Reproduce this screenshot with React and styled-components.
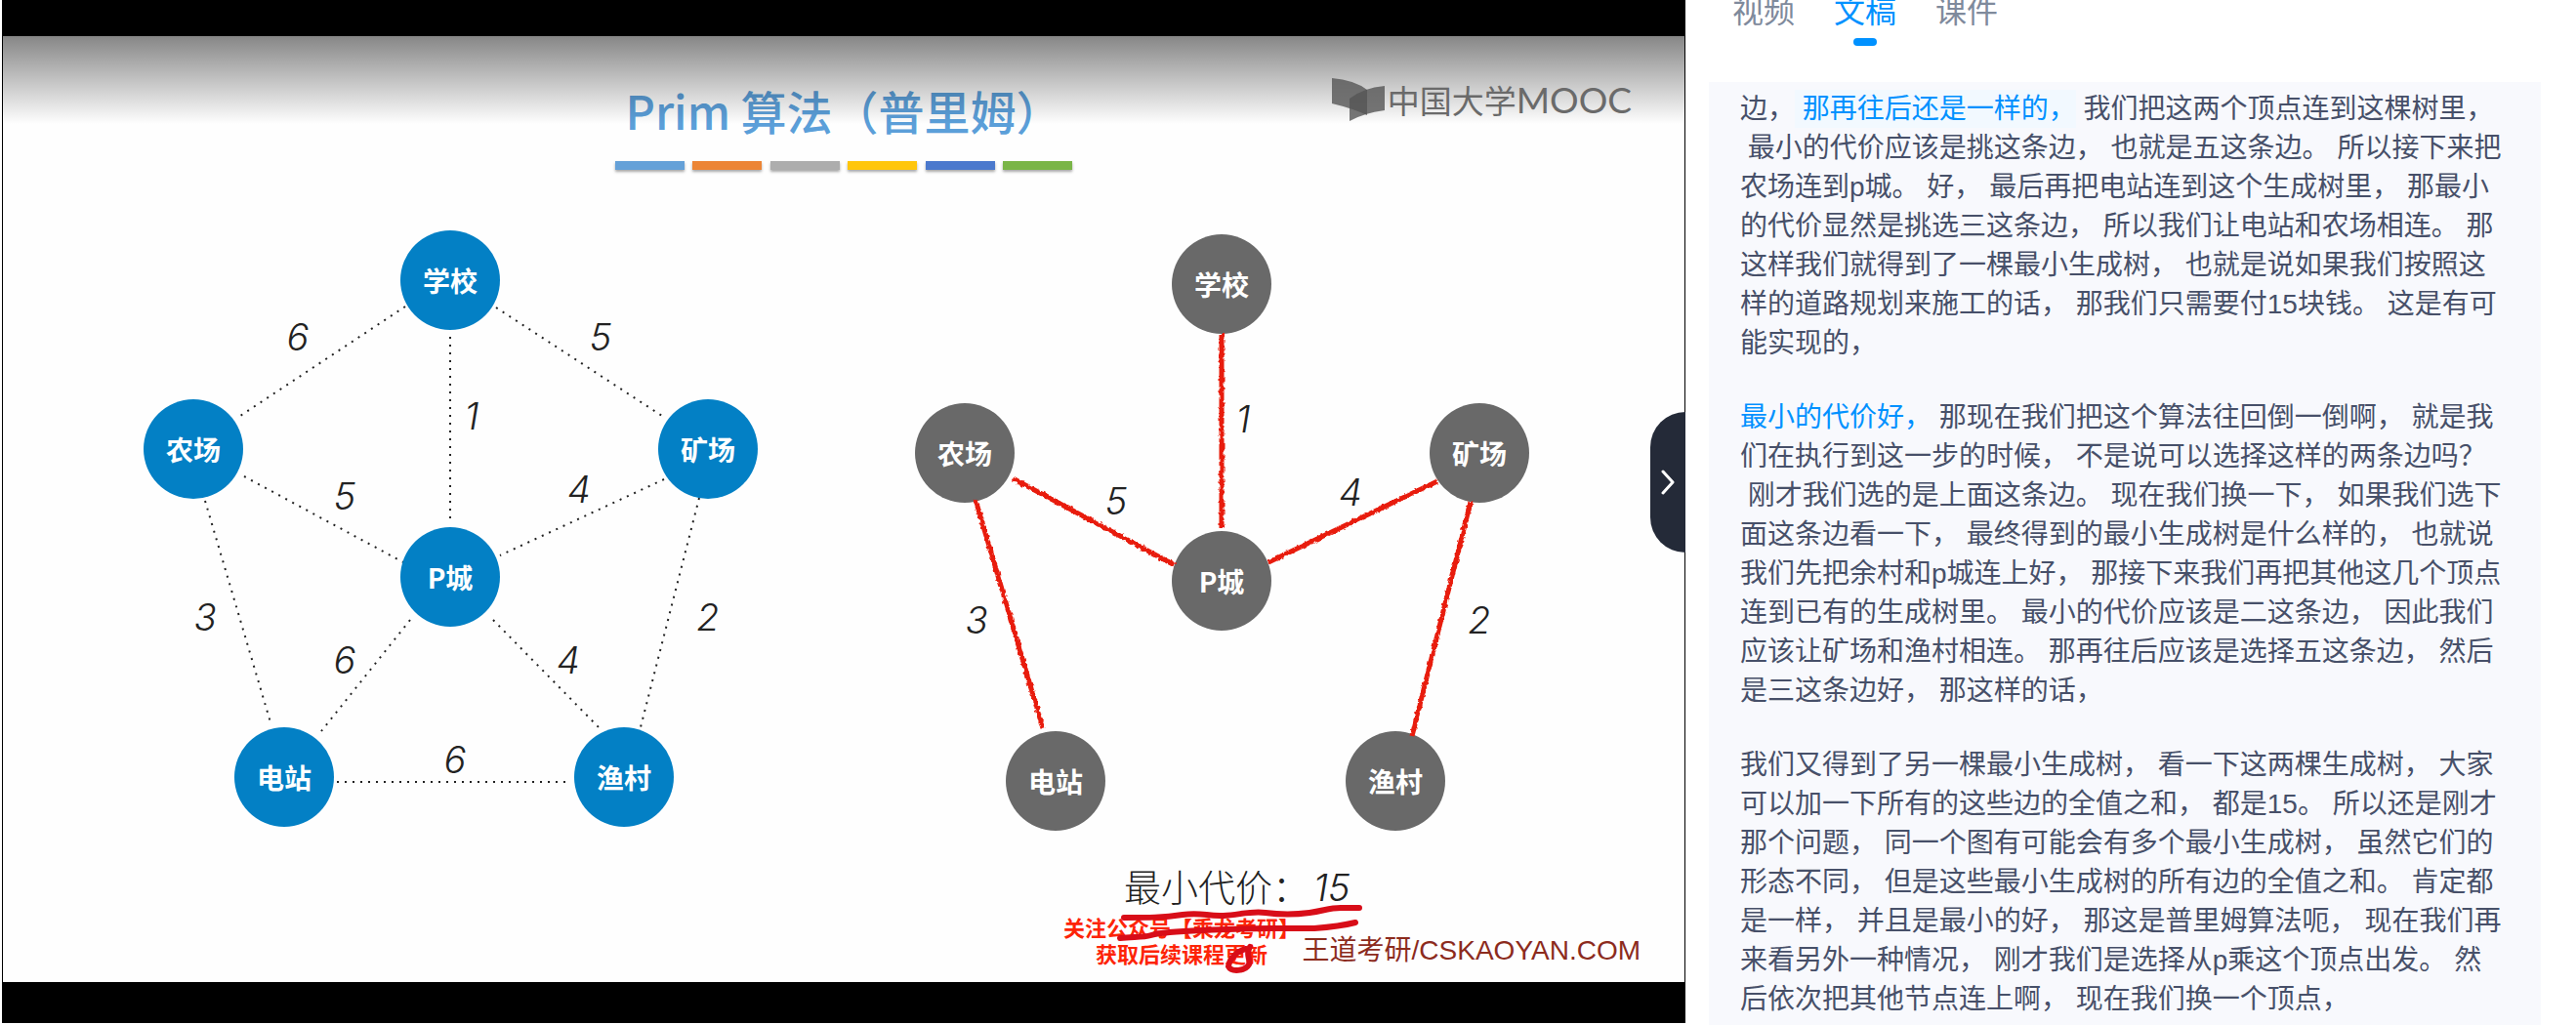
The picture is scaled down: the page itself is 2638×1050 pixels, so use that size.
import React from "react";
import styled, { createGlobalStyle } from "styled-components";

const SANS = '"Liberation Sans", "Noto Sans CJK SC", sans-serif';
const CJK = '"Noto Sans CJK SC", sans-serif';
const DIGITS = 'Inter, "Noto Sans CJK SC", sans-serif';

const GlobalStyle = createGlobalStyle`
  * { box-sizing: border-box; }
  body { margin: 0; background: #fff; font-family: ${SANS}; overflow: hidden; }
`;

const Page = styled.main`
  display: flex;
  height: 100vh;
  padding-left: 2px;
`;

/* ---------- player ---------- */
const Player = styled.section`
  position: relative;
  flex: 1;
  min-width: 0;
  display: flex;
  flex-direction: column;
  margin-bottom: 2px;
  padding: 37px 1px 42px;
  background: #000;
`;

const Slide = styled.div`
  position: relative;
  flex: 1;
  display: flex;
  flex-direction: column;
  background: #fefefe;
  overflow: hidden;
`;

const Shade = styled.div`
  position: absolute;
  inset: 0 0 auto;
  height: 90px;
  background: linear-gradient(rgba(0, 0, 0, 0.47), rgba(0, 0, 0, 0.21) 55%, transparent);
`;

const SlideHead = styled.header`
  display: flex;
  flex-direction: column;
  align-items: center;
  gap: 20px;
  padding-top: 44px;
`;

const Title = styled.h1`
  margin: 0;
  font: 500 47px/64px ${CJK};
  color: #5b9fd9;
`;

const Stripes = styled.div`
  display: flex;
  justify-content: space-between;
  width: 468px;
`;

const Stripe = styled.span`
  width: 71px;
  height: 9px;
  background: ${(p) => p.$color};
  box-shadow: 0 2px 3px rgba(0, 0, 0, 0.35);
`;

const Brand = styled.div`
  position: absolute;
  top: 42px;
  right: 54px;
  display: flex;
  align-items: center;
  gap: 2px;
  color: #6a6a6a;
  font: 400 33px/46px ${CJK};
`;

const BrandMark = styled.svg`
  width: 56px;
  height: 46px;
`;

const BrandName = styled.span`
  display: flex;
  white-space: nowrap;
`;

const BrandLatin = styled.span`
  font-family: Lato, sans-serif;
  font-size: 37px;
`;

const Graphs = styled.div`
  display: flex;
  gap: 160px;
  padding-left: 143px;
`;

const Canvas = styled.figure`
  position: relative;
  flex: none;
  width: 630px;
  height: 620px;
  margin: ${(p) => p.$top}px 0 0;
`;

const Edges = styled.svg`
  position: absolute;
  inset: 0;
  width: 100%;
  height: 100%;
  overflow: visible;
`;

const Node = styled.span`
  position: absolute;
  display: grid;
  place-items: center;
  width: 102px;
  height: 102px;
  margin: -51px 0 0 -51px;
  border-radius: 50%;
  background: ${(p) => p.$color};
  color: #fff;
  font: 700 28px/38px ${CJK};
`;

const Weight = styled.span`
  position: absolute;
  width: 40px;
  margin: -20px 0 0 -20px;
  text-align: center;
  font: italic 300 38px/40px ${DIGITS};
  color: #222;
`;

const Result = styled.p`
  position: absolute;
  top: 842px;
  left: 1148px;
  margin: 0;
  font: 300 38px/56px ${CJK};
  color: #222;
`;

const Total = styled.em`
  margin-left: 4px;
  font-family: ${DIGITS};
`;

const Notice = styled.p`
  position: absolute;
  top: 899px;
  left: 1086px;
  margin: 0;
  text-align: center;
  font: 700 22px/27px ${CJK};
  color: #fd2407;
`;

const Source = styled.p`
  position: absolute;
  top: 917px;
  right: 45px;
  margin: 0;
  font: 28px/40px ${SANS};
  color: #8c2b1d;
`;

const Ink = styled.svg`
  position: absolute;
  top: 883px;
  left: 1128px;
  width: 280px;
  height: 80px;
`;

const Collapse = styled.button`
  position: absolute;
  top: 422px;
  right: 0;
  display: grid;
  place-items: center;
  width: 36px;
  height: 144px;
  padding: 0;
  border: 0;
  border-radius: 36px 0 0 36px;
  background: #242a38;
`;

/* ---------- transcript ---------- */
const Side = styled.aside`
  flex: 0 0 912px;
  display: flex;
  flex-direction: column;
  padding: 0 36px 0 24px;
  overflow: hidden;
`;

const Tabs = styled.nav`
  display: flex;
  flex: none;
  gap: 40px;
  height: 92px;
  margin-top: -8px;
  padding-left: 24px;
`;

const Tab = styled.button`
  display: flex;
  flex-direction: column;
  align-items: center;
  gap: 7px;
  height: 56px;
  padding: 0;
  border: 0;
  background: none;
  font: 32px/40px ${SANS};
  color: ${(p) => (p.$active ? "#0091ff" : "#7f8a9c")};

  &::after {
    content: "";
    width: 24px;
    height: 8px;
    border-radius: 4px;
    background: ${(p) => (p.$active ? "#0091ff" : "transparent")};
  }
`;

const Transcript = styled.article`
  flex: 1;
  padding: 8px 36px 0 32px;
  background: #f8f9fd;
  color: #475069;
  font: 28px/40px ${SANS};
`;

const Paragraph = styled.p`
  margin: 0 0 36px;
  text-autospace: no-autospace;
`;

const Sentence = styled.span`
  padding: ${(p) => (p.$tone === "current" ? "4px 0" : "0")};
  color: ${(p) => (p.$tone ? "#0091ff" : "inherit")};
  background: ${(p) => (p.$tone === "current" ? "#f2f9ff" : "none")};
`;

/* ---------- data ---------- */
const STRIPES = ["#65a1d8", "#ec8535", "#adadad", "#ffc60b", "#4b79cd", "#7ab547"];

const NODES = [
  ["学校", 315, 51],
  ["农场", 52, 224],
  ["矿场", 579, 224],
  ["P城", 315, 355],
  ["电站", 145, 560],
  ["渔村", 493, 560],
];

const ALL_EDGES = [
  [269, 78, 100, 190], [362, 79, 532, 190], [315, 109, 315, 296],
  [104, 252, 267, 340], [534, 255, 366, 333], [64, 277, 131, 504],
  [570, 274, 510, 509], [274, 399, 183, 513], [359, 399, 467, 509],
  [199, 565, 435, 565],
];

const ALL_WEIGHTS = [
  [6, 159, 109], [5, 469, 109], [1, 337, 190], [5, 207, 272], [4, 447, 265],
  [3, 64, 396], [2, 579, 396], [6, 207, 440], [4, 436, 440], [6, 320, 542],
];

const TREE_EDGES = [
  [315, 102, 315, 301], [101, 250, 267, 339], [536, 253, 363, 336],
  [63, 272, 132, 506], [570, 274, 510, 514],
];

const TREE_WEIGHTS = [[1, 337, 189], [5, 207, 273], [4, 447, 264], [3, 64, 395], [2, 579, 395]];

const PARAGRAPHS = [
  [
    ["边，"],
    ["那再往后还是一样的，", "current"],
    ["我们把这两个顶点连到这棵树里，"],
    ["最小的代价应该是挑这条边，"],
    ["也就是五这条边。"],
    ["所以接下来把农场连到p城。"],
    ["好，"],
    ["最后再把电站连到这个生成树里，"],
    ["那最小的代价显然是挑选三这条边，"],
    ["所以我们让电站和农场相连。"],
    ["那这样我们就得到了一棵最小生成树，"],
    ["也就是说如果我们按照这样的道路规划来施工的话，"],
    ["那我们只需要付15块钱。"],
    ["这是有可能实现的，"],
  ],
  [
    ["最小的代价好，", "marked"],
    ["那现在我们把这个算法往回倒一倒啊，"],
    ["就是我们在执行到这一步的时候，"],
    ["不是说可以选择这样的两条边吗？"],
    ["刚才我们选的是上面这条边。"],
    ["现在我们换一下，"],
    ["如果我们选下面这条边看一下，"],
    ["最终得到的最小生成树是什么样的，"],
    ["也就说我们先把余村和p城连上好，"],
    ["那接下来我们再把其他这几个顶点连到已有的生成树里。"],
    ["最小的代价应该是二这条边，"],
    ["因此我们应该让矿场和渔村相连。"],
    ["那再往后应该是选择五这条边，"],
    ["然后是三这条边好，"],
    ["那这样的话，"],
  ],
  [
    ["我们又得到了另一棵最小生成树，"],
    ["看一下这两棵生成树，"],
    ["大家可以加一下所有的这些边的全值之和，"],
    ["都是15。"],
    ["所以还是刚才那个问题，"],
    ["同一个图有可能会有多个最小生成树，"],
    ["虽然它们的形态不同，"],
    ["但是这些最小生成树的所有边的全值之和。"],
    ["肯定都是一样，"],
    ["并且是最小的好，"],
    ["那这是普里姆算法呃，"],
    ["现在我们再来看另外一种情况，"],
    ["刚才我们是选择从p乘这个顶点出发。"],
    ["然后依次把其他节点连上啊，"],
    ["现在我们换一个顶点，"],
  ],
];

function Graph({ color, edges, weights, top, drawn }) {
  return (
    <Canvas $top={top}>
      {!drawn && <EdgeLayer edges={edges} />}
      {NODES.map(([name, x, y]) => (
        <Node key={name} $color={color} style={{ left: x, top: y }}>{name}</Node>
      ))}
      {drawn && <EdgeLayer edges={edges} drawn />}
      {weights.map(([w, x, y]) => (
        <Weight key={`${x}-${y}`} style={{ left: x, top: y }}>{w}</Weight>
      ))}
    </Canvas>
  );
}

function EdgeLayer({ edges, drawn }) {
  return (
    <Edges aria-hidden="true">
      <defs>
        <filter id="crayon" filterUnits="userSpaceOnUse" x="0" y="0" width="630" height="620">
          <feTurbulence type="fractalNoise" baseFrequency="0.25" numOctaves="2" seed="4" />
          <feDisplacementMap in="SourceGraphic" scale="4" xChannelSelector="R" yChannelSelector="G" />
        </filter>
      </defs>
      <g
        stroke={drawn ? "#e81b0c" : "#222"}
        strokeWidth={drawn ? 5 : 2}
        strokeDasharray={drawn ? undefined : "2 6"}
        filter={drawn ? "url(#crayon)" : undefined}
      >
        {edges.map(([x1, y1, x2, y2]) => (
          <line key={`${x1}-${y1}-${x2}`} x1={x1} y1={y1} x2={x2} y2={y2} />
        ))}
      </g>
    </Edges>
  );
}

export default function App() {
  return (
    <Page>
      <GlobalStyle />
      <Player>
        <Slide>
          <SlideHead>
            <Title>Prim 算法（普里姆）</Title>
            <Stripes>
              {STRIPES.map((c) => <Stripe key={c} $color={c} />)}
            </Stripes>
          </SlideHead>
          <Graphs>
            <Graph color="#0380c5" edges={ALL_EDGES} weights={ALL_WEIGHTS} top={62} />
            <Graph color="#696969" edges={TREE_EDGES} weights={TREE_WEIGHTS} top={66} drawn />
          </Graphs>
          <Result>最小代价：<Total>15</Total></Result>
          <Notice>关注公众号【乘龙考研】<br />获取后续课程更新</Notice>
          <Source>王道考研/CSKAOYAN.COM</Source>
          <Ink viewBox="0 0 280 80" fill="none" stroke="#d80d18" strokeWidth="6" strokeLinecap="round" strokeLinejoin="round" aria-hidden="true">
            <path d="M20 20C45 20 60 20 80 17S105 19 122 18S150 13 165 15S195 17 210 15S230 10 242 10L261 10" />
            <path d="M16 41C28 39 38 41 48 38S75 34 100 33S145 31 170 31L215 31C228 30 245 28 257 25" />
            <path d="M145 52C136 54 128 62 127 70C130 76 144 75 148 68C150 62 144 58 149 50" />
          </Ink>
          <Shade />
          <Brand>
            <BrandMark viewBox="0 0 56 46" aria-hidden="true">
              <path d="M1 1Q24 3 37 13V39Q22 32 1 27Z" fill="#555" fillOpacity=".8" />
              <path d="M19 22Q33 11 55 9V34Q33 37 19 45Z" fill="#555" fillOpacity=".8" />
            </BrandMark>
            <BrandName>中国大学<BrandLatin>MOOC</BrandLatin></BrandName>
          </Brand>
        </Slide>
        <Collapse aria-label="收起侧栏">
          <svg width="16" height="26" viewBox="0 0 16 26" fill="none" stroke="#fff" strokeWidth="3" strokeLinecap="round" strokeLinejoin="round">
            <path d="M3 2L13 13L3 24" />
          </svg>
        </Collapse>
      </Player>
      <Side>
        <Tabs>
          <Tab>视频</Tab>
          <Tab $active>文稿</Tab>
          <Tab>课件</Tab>
        </Tabs>
        <Transcript>
          {PARAGRAPHS.map((sentences, i) => (
            <Paragraph key={i}>
              {sentences.map(([text, tone], j) => (
                <React.Fragment key={j}>
                  {j > 0 && <wbr />}
                  <Sentence $tone={tone}>{j > 0 ? "\u00a0" : ""}{text}</Sentence>
                </React.Fragment>
              ))}
            </Paragraph>
          ))}
        </Transcript>
      </Side>
    </Page>
  );
}
